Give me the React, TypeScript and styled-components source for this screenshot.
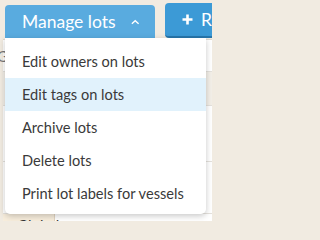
import styled, { createGlobalStyle } from "styled-components";

const GlobalStyle = createGlobalStyle`
  body {
    margin: 0;
    background: #f1ebe1;
    font-family: Lato, "Open Sans", "DejaVu Sans", sans-serif;
    overflow: hidden;
  }
`;

const Page = styled.div`
  position: relative;
  width: 212px;
  height: 221px;
  overflow: hidden;
`;

const Toolbar = styled.div`
  display: flex;
  align-items: flex-end;
  gap: 10px;
  padding: 3px 0 0 5px;
  height: 38px;
  box-sizing: border-box;
`;

const ToolbarButton = styled.button<{ $primary?: boolean }>`
  display: flex;
  align-items: center;
  flex-shrink: 0;
  width: ${({ $primary }) => ($primary ? "auto" : "150px")};
  height: ${({ $primary }) => ($primary ? "35px" : "33px")};
  padding: 0 16px 0 17px;
  border: 0;
  border-bottom: ${({ $primary }) => ($primary ? "2px solid #2776ab" : "0")};
  border-radius: ${({ $primary }) => ($primary ? "4px" : "4px 4px 0 0")};
  background: ${({ $primary }) => ($primary ? "#3c9ad6" : "#59abdf")};
  color: #fff;
  font-family: inherit;
  font-size: 17.5px;
  white-space: nowrap;
`;

const Caret = styled.svg`
  margin-left: 15px;
`;

const PlusIcon = styled.svg`
  margin-right: 8px;
`;

const Table = styled.div`
  margin: 1px 0 0 3px;
  background: #fff;
  border-top: 1px solid #dedad3;
`;

const Row = styled.div<{ $height: number; $tint?: boolean }>`
  height: ${({ $height }) => $height}px;
  display: flex;
  align-items: center;
  border-bottom: 1px solid #e4e1dc;
  background: ${({ $tint }) => ($tint ? "#f3efe8" : "#fff")};
  font-size: 15px;
  white-space: nowrap;
`;

const Cell = styled.div<{ $width?: number; $beige?: boolean }>`
  width: ${({ $width }) => ($width ? `${$width}px` : "auto")};
  height: 100%;
  display: flex;
  align-items: ${({ $beige }) => ($beige ? "flex-start" : "center")};
  padding: ${({ $beige }) => ($beige ? "2px 0 0 14px" : "0")};
  margin-left: ${({ $beige }) => ($beige ? "0" : "-6px")};
  box-sizing: border-box;
  background: ${({ $beige }) => ($beige ? "#f7eddc" : "transparent")};
  border-right: ${({ $beige }) => ($beige ? "1px solid #e2d6c3" : "0")};
  color: ${({ $beige }) => ($beige ? "#333" : "#777")};
`;

const Menu = styled.ul`
  position: absolute;
  top: 38px;
  left: 5px;
  width: 201px;
  margin: 0;
  padding: 7px 0 4px;
  list-style: none;
  background: #fff;
  border-radius: 0 0 5px 5px;
  box-shadow: 0 2px 6px rgba(0, 0, 0, 0.22);
`;

const MenuItem = styled.li<{ $active?: boolean }>`
  height: 33px;
  display: flex;
  align-items: center;
  padding-left: 17px;
  font-size: 14.6px;
  color: #3a3a3a;
  background: ${({ $active }) => ($active ? "#e1f2fc" : "transparent")};
  white-space: nowrap;
`;

const items = [
  "Edit owners on lots",
  "Edit tags on lots",
  "Archive lots",
  "Delete lots",
  "Print lot labels for vessels",
];

export default function App() {
  return (
    <Page>
      <GlobalStyle />
      <Toolbar>
        <ToolbarButton>
          Manage lots
          <Caret width="10" height="6" viewBox="0 0 10 6">
            <path d="M1 5.2 L5 1.5 L9 5.2" fill="none" stroke="#fff" strokeWidth="1.6" />
          </Caret>
        </ToolbarButton>
        <ToolbarButton $primary>
          <PlusIcon width="11" height="11" viewBox="0 0 11 11">
            <path d="M5.5 0.5v10M0.5 5.5h10" stroke="#fff" strokeWidth="2.6" />
          </PlusIcon>
          Receive
        </ToolbarButton>
      </Toolbar>
      <Table>
        <Row $height={31}>
          <Cell>G</Cell>
        </Row>
        <Row $height={33} $tint />
        <Row $height={55} />
        <Row $height={51} />
        <Row $height={30}>
          <Cell $width={52} $beige>
            Global
          </Cell>
        </Row>
      </Table>
      <Menu>
        {items.map((label) => (
          <MenuItem key={label} $active={label === "Edit tags on lots"}>
            {label}
          </MenuItem>
        ))}
      </Menu>
    </Page>
  );
}
